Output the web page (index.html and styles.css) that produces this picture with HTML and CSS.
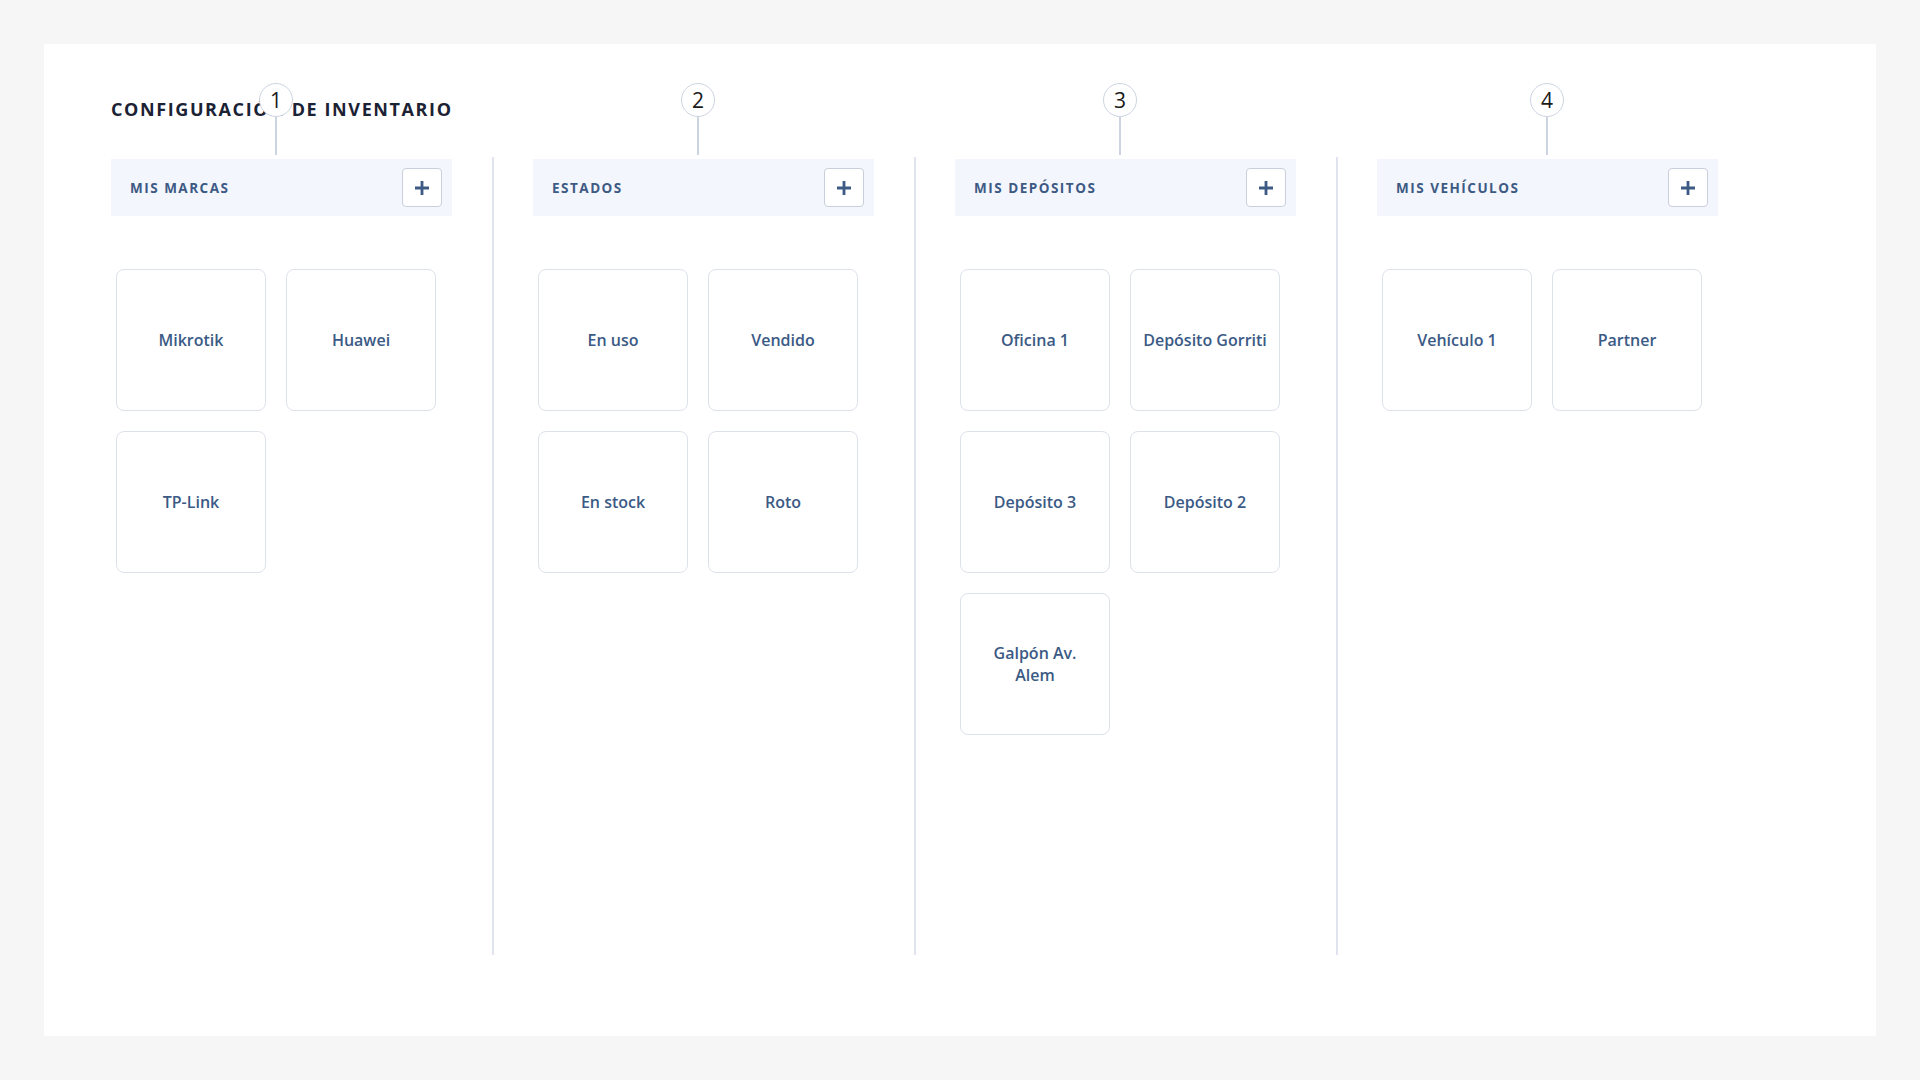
FILE: index.html
```html
<!DOCTYPE html>
<html lang="es">
<head>
  <meta charset="UTF-8">
  <meta name="viewport" content="width=device-width, initial-scale=1.0">
  <title>Configuración de inventario</title>
  <link rel="stylesheet" href="styles.css">
</head>
<body>

<div class="panel">
  <h1 class="title">Configuración de inventario</h1>

  <div class="columns">

    <!-- Marcas -->
    <section class="column">
      <div class="step"><span class="step-num">1</span></div>
      <div class="column-header">
        <h2>Mis marcas</h2>
        <button class="add-btn" aria-label="Agregar marca">
          <svg viewBox="0 0 16 16" width="16" height="16"><path d="M8 1v14M1 8h14" stroke="currentColor" stroke-width="2.8" fill="none"/></svg>
        </button>
      </div>
      <div class="card-grid">
        <div class="card">Mikrotik</div>
        <div class="card">Huawei</div>
        <div class="card">TP-Link</div>
      </div>
    </section>

    <!-- Estados -->
    <section class="column">
      <div class="step"><span class="step-num">2</span></div>
      <div class="column-header">
        <h2>Estados</h2>
        <button class="add-btn" aria-label="Agregar estado">
          <svg viewBox="0 0 16 16" width="16" height="16"><path d="M8 1v14M1 8h14" stroke="currentColor" stroke-width="2.8" fill="none"/></svg>
        </button>
      </div>
      <div class="card-grid">
        <div class="card">En uso</div>
        <div class="card">Vendido</div>
        <div class="card">En stock</div>
        <div class="card">Roto</div>
      </div>
    </section>

    <!-- Depósitos -->
    <section class="column">
      <div class="step"><span class="step-num">3</span></div>
      <div class="column-header">
        <h2>Mis depósitos</h2>
        <button class="add-btn" aria-label="Agregar depósito">
          <svg viewBox="0 0 16 16" width="16" height="16"><path d="M8 1v14M1 8h14" stroke="currentColor" stroke-width="2.8" fill="none"/></svg>
        </button>
      </div>
      <div class="card-grid">
        <div class="card">Oficina 1</div>
        <div class="card">Depósito Gorriti</div>
        <div class="card">Depósito 3</div>
        <div class="card">Depósito 2</div>
        <div class="card">Galpón Av. Alem</div>
      </div>
    </section>

    <!-- Vehículos -->
    <section class="column">
      <div class="step step-last"><span class="step-num">4</span></div>
      <div class="column-header">
        <h2>Mis vehículos</h2>
        <button class="add-btn" aria-label="Agregar vehículo">
          <svg viewBox="0 0 16 16" width="16" height="16"><path d="M8 1v14M1 8h14" stroke="currentColor" stroke-width="2.8" fill="none"/></svg>
        </button>
      </div>
      <div class="card-grid">
        <div class="card">Vehículo 1</div>
        <div class="card">Partner</div>
      </div>
    </section>

  </div>
</div>

</body>
</html>
```

FILE: styles.css
```css
/* Global Styles */
* {
  box-sizing: border-box;
}

body {
  margin: 0;
  background-color: #f6f6f6;
  font-family: 'Open Sans', 'Noto Sans', sans-serif;
  color: #1d2433;
}

.panel {
  margin: 44px;
  height: 992px;
  background-color: #ffffff;
  padding: 53px 0 0 67px;
}

.title {
  margin: 0;
  font-size: 18px;
  line-height: 24px;
  font-weight: 700;
  letter-spacing: 1.6px;
  text-transform: uppercase;
  color: #1b2234;
}

/* Columns */
.columns {
  display: flex;
  margin-top: 36px;
}

.column {
  position: relative;
  width: 422px;
  height: 798px;
  padding: 2px 40px 0 39px;
  border-right: 2px solid #dfe4ee;
}

.column:first-child {
  width: 383px;
  padding-left: 0;
}

.column:last-child {
  border-right: none;
}

.column-header {
  display: flex;
  align-items: center;
  justify-content: space-between;
  width: 341px;
  height: 57px;
  padding: 0 10px 0 19px;
  background-color: #f3f6fc;
}

.column-header h2 {
  margin: 0;
  font-size: 13.5px;
  font-weight: 700;
  letter-spacing: 1.5px;
  text-transform: uppercase;
  color: #3d5a84;
}

.add-btn {
  display: flex;
  align-items: center;
  justify-content: center;
  width: 40px;
  height: 39px;
  padding: 0;
  border: 1px solid #c9d0dc;
  border-radius: 4px;
  background-color: #ffffff;
  color: #3d5a84;
  cursor: pointer;
}

/* Cards */
.card-grid {
  display: grid;
  grid-template-columns: repeat(2, 150px);
  grid-auto-rows: 142px;
  gap: 20px;
  margin: 53px 0 0 5px;
}

.card {
  display: flex;
  align-items: center;
  justify-content: center;
  padding: 0 12px;
  border: 1px solid #dde2ea;
  border-radius: 8px;
  text-align: center;
  font-size: 16px;
  line-height: 22px;
  font-weight: 600;
  color: #3b5a85;
}

/* Step markers over each column */
.step {
  position: absolute;
  top: -74px;
  left: 204px;
  width: 34px;
  margin-left: -17px;
  display: flex;
  flex-direction: column;
  align-items: center;
  z-index: 2;
}

.column:first-child .step {
  left: 165px;
}

.step-last {
  left: 209px;
}

.step::after {
  content: "";
  width: 1.5px;
  height: 38px;
  background-color: #cdd4e1;
}

.step-num {
  width: 34px;
  height: 34px;
  border: 1.5px solid #cdd4e1;
  border-radius: 50%;
  background-color: #ffffff;
  display: flex;
  align-items: center;
  justify-content: center;
  font-size: 21px;
  font-weight: 400;
  color: #1a1a1a;
}
```
